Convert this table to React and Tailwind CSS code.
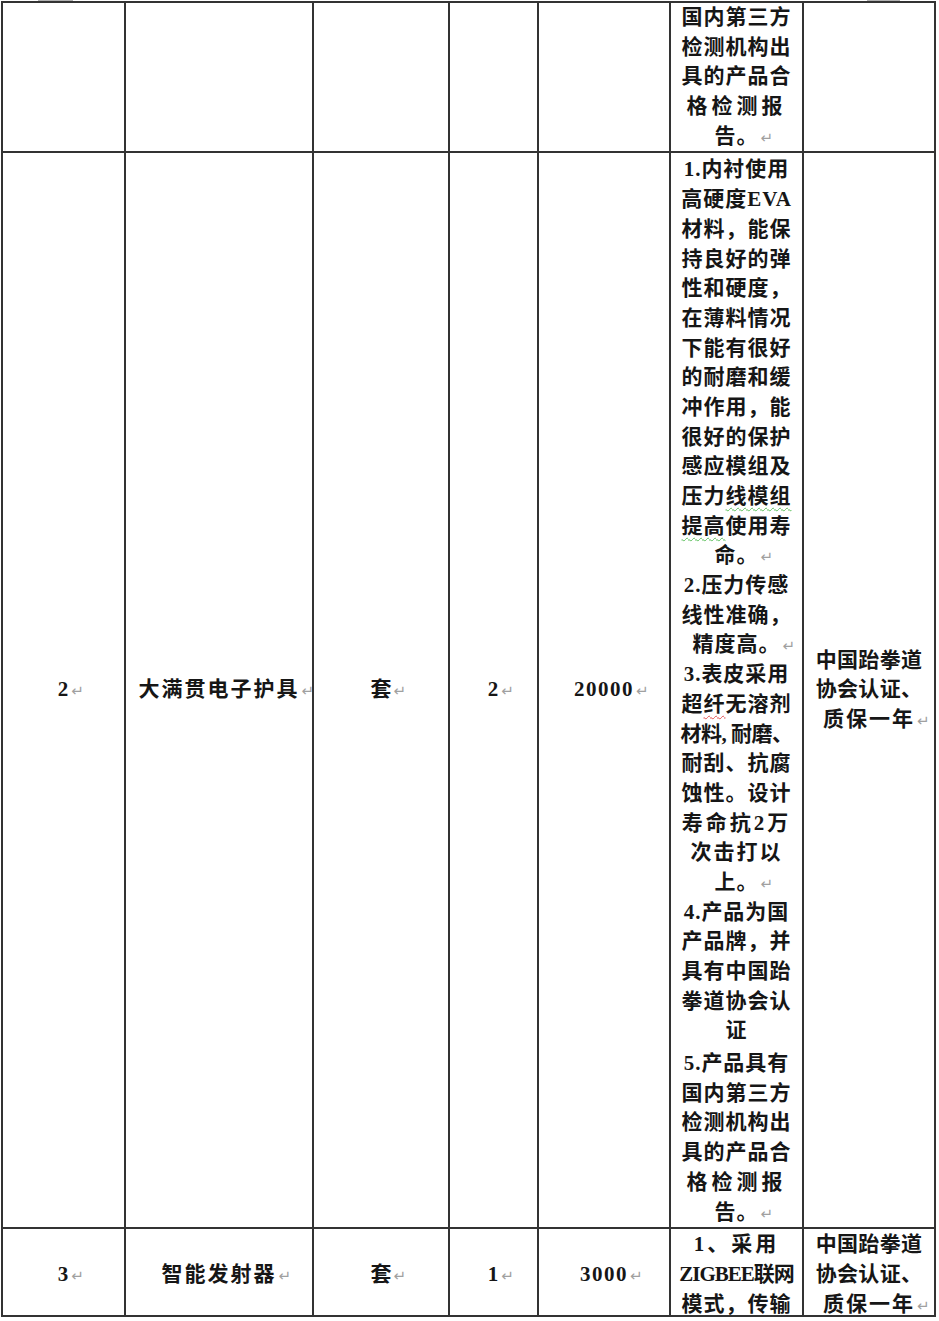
import React from "react";

const Mark = () => (
  <span className="inline-block h-0 w-0 whitespace-nowrap align-baseline">
    <span className="ml-[2px] font-['DejaVu_Sans'] text-[15px] font-normal leading-none tracking-normal text-[#a0a0a0]">↵</span>
  </span>
);

const L = ({ t = "tracking-[1px]", children }) => (
  <div className={`h-[29.7px] whitespace-nowrap text-center ${t}`}>{children}</div>
);

const G = ({ children }) => (
  <span className="underline decoration-wavy decoration-[#5cbf5c] decoration-1 underline-offset-[4px]">{children}</span>
);
const R = ({ children }) => (
  <span className="underline decoration-wavy decoration-[#e05050] decoration-1 underline-offset-[4px]">{children}</span>
);

const cell = "border-r-2 border-b-2 border-[#333]";
const mid = "flex items-center justify-center";
const r3 = "h-[88px] overflow-hidden pt-[6px]";

export default function App() {
  return (
    <div className="min-h-[1321px] w-[939px] bg-white font-['Liberation_Serif','Noto_Sans_CJK_SC',serif] text-[21px] font-bold leading-[29.7px] text-[#161616]">
      <div className="flex h-[1px]">
        <div className="ml-[38px] h-[1px] w-[35px] bg-[#b0b0b0]" />
        <div className="ml-[794px] h-[1px] w-[33px] bg-[#b0b0b0]" />
      </div>
      <div className="ml-[1px] grid w-fit grid-cols-[123px_188px_136px_89px_132px_133px_132px] border-l-2 border-t-2 border-[#333]">
        {/* Row 1 */}
        <div className={cell} />
        <div className={cell} />
        <div className={cell} />
        <div className={cell} />
        <div className={cell} />
        <div className={cell}>
          <L>国内第三方</L>
          <L>检测机构出</L>
          <L>具的产品合</L>
          <L t="tracking-[4px]">格检测报</L>
          <L t="tracking-[1px]">告。<Mark /></L>
        </div>
        <div className={cell} />

        {/* Row 2 */}
        <div className={`${cell} ${mid}`}>
          <span className="tracking-[1px]">2<Mark /></span>
        </div>
        <div className={`${cell} ${mid}`}>
          <span className="tracking-[2px]">大满贯电子护具<Mark /></span>
        </div>
        <div className={`${cell} ${mid}`}>
          <span>套<Mark /></span>
        </div>
        <div className={`${cell} ${mid}`}>
          <span className="tracking-[1px]">2<Mark /></span>
        </div>
        <div className={`${cell} ${mid}`}>
          <span className="tracking-[1.5px]">20000<Mark /></span>
        </div>
        <div className={`${cell} pt-[2px]`}>
          <L>1.内衬使用</L>
          <L>高硬度EVA</L>
          <L>材料，能保</L>
          <L>持良好的弹</L>
          <L>性和硬度，</L>
          <L>在薄料情况</L>
          <L>下能有很好</L>
          <L>的耐磨和缓</L>
          <L>冲作用，能</L>
          <L>很好的保护</L>
          <L>感应模组及</L>
          <L>压力<G>线模组</G></L>
          <L><G>提高</G>使用寿</L>
          <L>命。<Mark /></L>
          <L>2.压力传感</L>
          <L>线性准确，</L>
          <L>精度高。<Mark /></L>
          <L>3.表皮采用</L>
          <L>超<R>纤</R>无溶剂</L>
          <L t="tracking-[-0.5px]">材料, 耐磨、</L>
          <L>耐刮、抗腐</L>
          <L>蚀性。设计</L>
          <L t="tracking-[3px]">寿命抗2万</L>
          <L t="tracking-[2px]">次击打以</L>
          <L>上。<Mark /></L>
          <L>4.产品为国</L>
          <L>产品牌，并</L>
          <L>具有中国跆</L>
          <L>拳道协会认</L>
          <L>证</L>
          <div className="h-[3px]" />
          <L>5.产品具有</L>
          <L>国内第三方</L>
          <L>检测机构出</L>
          <L>具的产品合</L>
          <L t="tracking-[4px]">格检测报</L>
          <L>告。<Mark /></L>
        </div>
        <div className={`${cell} ${mid}`}>
          <div>
            <L t="tracking-[0.3px]">中国跆拳道</L>
            <L t="tracking-[0.3px]">协会认证、</L>
            <L t="tracking-[2px]">质保一年<Mark /></L>
          </div>
        </div>

        {/* Row 3 */}
        <div className={`${cell} ${mid} ${r3}`}>
          <span className="tracking-[1px]">3<Mark /></span>
        </div>
        <div className={`${cell} ${mid} ${r3}`}>
          <span className="tracking-[2px]">智能发射器<Mark /></span>
        </div>
        <div className={`${cell} ${mid} ${r3}`}>
          <span>套<Mark /></span>
        </div>
        <div className={`${cell} ${mid} ${r3}`}>
          <span className="tracking-[1px]">1<Mark /></span>
        </div>
        <div className={`${cell} ${mid} ${r3}`}>
          <span className="tracking-[1.5px]">3000<Mark /></span>
        </div>
        <div className={`${cell} h-[88px] overflow-hidden pt-[1px]`}>
          <L t="tracking-[3px]">1、采用</L>
          <L t="tracking-[-1px]">ZIGBEE联网</L>
          <L>模式，传输</L>
        </div>
        <div className={`${cell} h-[88px] overflow-hidden pt-[1px]`}>
          <L t="tracking-[0.3px]">中国跆拳道</L>
          <L t="tracking-[0.3px]">协会认证、</L>
          <L t="tracking-[2px]">质保一年<Mark /></L>
        </div>
      </div>
    </div>
  );
}
